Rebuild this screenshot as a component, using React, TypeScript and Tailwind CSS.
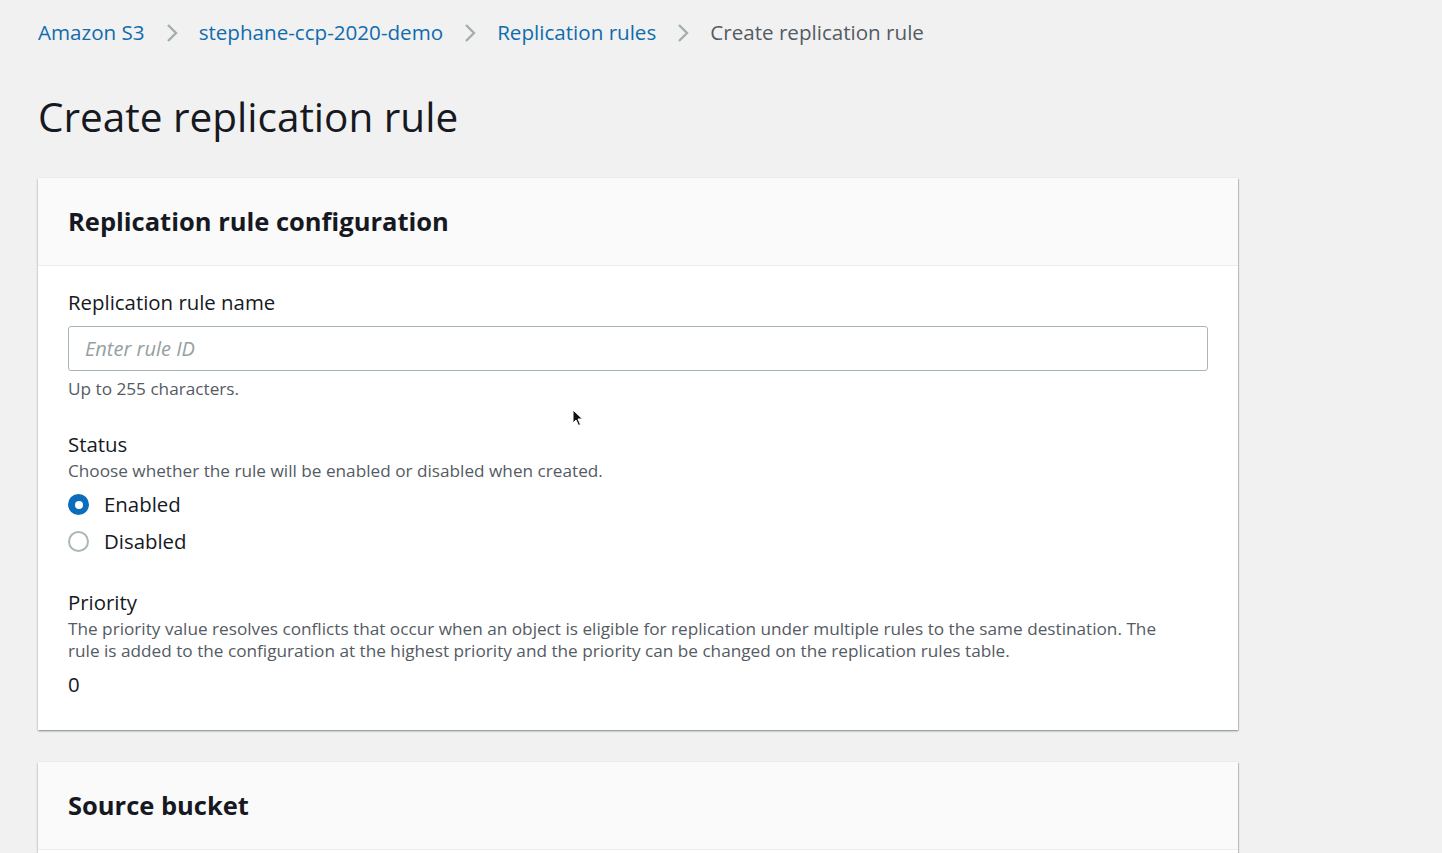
import React from "react";

const crumbs = ["Amazon S3", "stephane-ccp-2020-demo", "Replication rules"];

function Chevron() {
  return (
    <svg width="14" height="22" viewBox="0 0 14 22" className="mx-[20px]">
      <path d="M3 3 L11 11 L3 19" fill="none" stroke="#a3aeb0" strokeWidth="2.4" />
    </svg>
  );
}

function Radio({ checked, label }: { checked?: boolean; label: string }) {
  return (
    <div className="flex items-center h-[37px]">
      {checked ? (
        <span className="w-[21px] h-[21px] rounded-full bg-[#0a6ebd] flex items-center justify-center">
          <span className="w-[8px] h-[8px] rounded-full bg-white" />
        </span>
      ) : (
        <span className="w-[21px] h-[21px] rounded-full border-2 border-[#aab7b8] bg-white" />
      )}
      <span className="ml-[15px] text-[20.4px] text-[#16191f]">{label}</span>
    </div>
  );
}

export default function App() {
  return (
    <div
      className="relative min-h-[853px] bg-[#f1f1f1] pl-[38px] overflow-hidden"
      style={{ fontFamily: '"Open Sans", "Noto Sans", sans-serif' }}
    >
      {/* Breadcrumb */}
      <nav className="flex items-center h-[65px] text-[20.6px]">
        {crumbs.map((c) => (
          <React.Fragment key={c}>
            <a className="text-[#0f6cad]">{c}</a>
            <Chevron />
          </React.Fragment>
        ))}
        <span className="text-[#545b64]">Create replication rule</span>
      </nav>

      <h1 className="text-[40.5px] text-[#16191f] leading-[48px] mt-[28px] mb-[37px]">Create replication rule</h1>

      {/* Card 1 */}
      <section className="w-[1200px] bg-white shadow-[0_1px_2px_rgba(0,28,36,0.4),1px_1px_0_rgba(0,28,36,0.12)]">
        <div className="h-[88px] bg-[#fafafa] border-b border-[#eaeded] flex items-center px-[30px]">
          <h2 className="text-[25.5px] font-bold text-[#16191f]">Replication rule configuration</h2>
        </div>
        <div className="px-[30px] pt-[22px] pb-[32px]">
          <div className="text-[20.4px] text-[#16191f] leading-[28px]">Replication rule name</div>
          <div className="mt-[10px] w-[1140px] h-[45px] border border-[#aab7b8] rounded-[3px] flex items-center px-[16px]">
            <span className="italic text-[20px] text-[#95a0a2]">Enter rule ID</span>
          </div>
          <div className="mt-[6px] text-[17.2px] text-[#545b64] leading-[24px]">Up to 255 characters.</div>

          <div className="mt-[29px] text-[20.4px] text-[#16191f] leading-[28px]">Status</div>
          <div className="text-[17.2px] text-[#545b64] leading-[24px] mt-[1px]">Choose whether the rule will be enabled or disabled when created.</div>
          <div className="mt-[3px]">
            <Radio checked label="Enabled" />
            <Radio label="Disabled" />
          </div>

          <div className="mt-[28px] text-[20.4px] text-[#16191f] leading-[28px]">Priority</div>
          <div className="text-[17.2px] text-[#545b64] leading-[22px] pr-[20px] mt-[2px]">
            The priority value resolves conflicts that occur when an object is eligible for replication under multiple rules to the same destination. The rule is added to the configuration at the highest priority and the priority can be changed on the replication rules table.
          </div>
          <div className="mt-[8px] text-[20.4px] text-[#16191f] leading-[28px]">0</div>
        </div>
      </section>

      {/* Card 2 */}
      <section className="mt-[32px] w-[1200px] bg-white shadow-[0_1px_2px_rgba(0,28,36,0.4),1px_1px_0_rgba(0,28,36,0.12)]">
        <div className="h-[88px] bg-[#fafafa] border-b border-[#eaeded] flex items-center px-[30px]">
          <h2 className="text-[25.5px] font-bold text-[#16191f]">Source bucket</h2>
        </div>
        <div className="h-[60px]" />
      </section>

      {/* Mouse pointer */}
      <svg className="absolute left-[572px] top-[409px]" width="12" height="18" viewBox="0 0 12 18">
        <path d="M1 1 L1 14 L4 11 L6.5 16.5 L8.5 15.5 L6 10 L10.5 10 Z" fill="#111" stroke="#fff" strokeWidth="1" />
      </svg>
    </div>
  );
}
